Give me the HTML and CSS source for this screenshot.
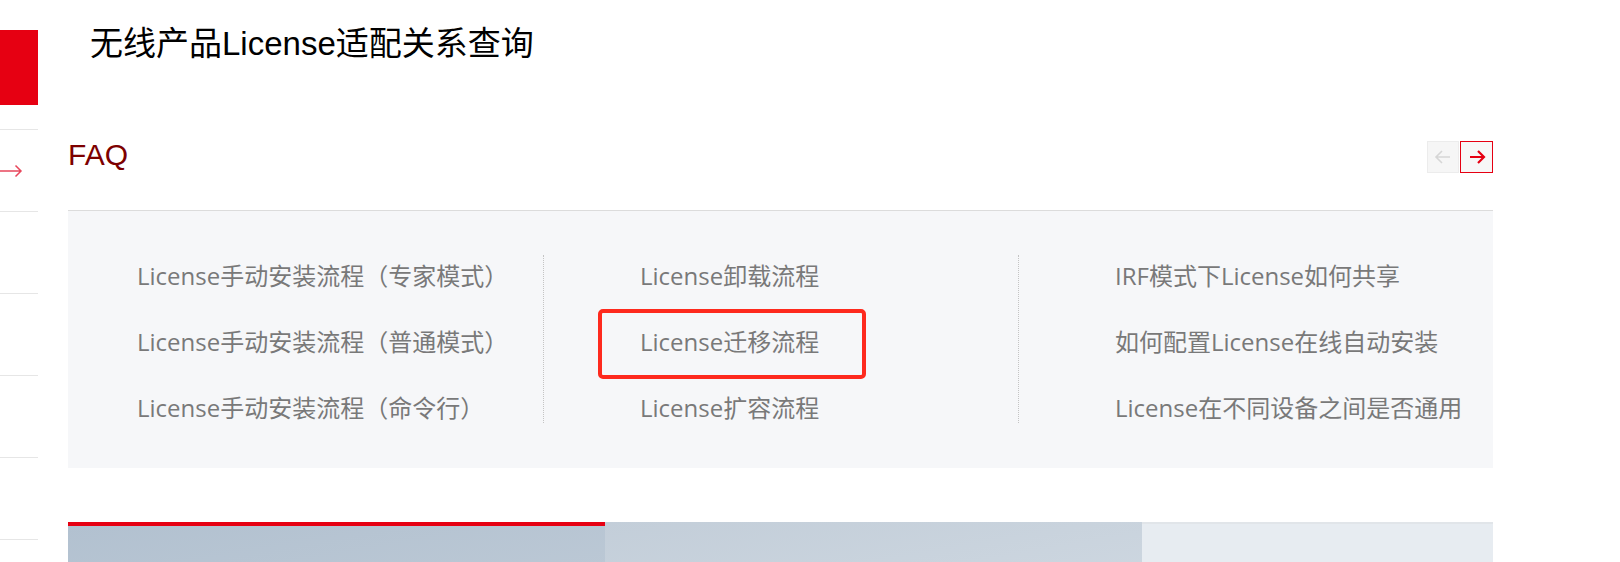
FILE: index.html
```html
<!DOCTYPE html>
<html>
<head>
  <title>无线产品License适配关系查询</title>
  <link rel="stylesheet" href="styles.css">
</head>
<body>
  <div class="page">
    <div class="sidebar">
      <div class="side-top"></div>
      <ul class="side-list">
        <li class="side-item">
          <svg class="side-arrow" width="24" height="14" viewBox="0 0 24 14">
            <path d="M0 7H21M15.5 1.5L21 7L15.5 12.5" fill="none" stroke="#e8475c" stroke-width="1.5"/>
          </svg>
        </li>
        <li class="side-item"></li>
        <li class="side-item"></li>
        <li class="side-item"></li>
        <li class="side-item"></li>
        <li class="side-item"></li>
      </ul>
    </div>

    <div class="main">
      <h1 class="title">无线产品License适配关系查询</h1>

      <div class="faq-head">
        <h2 class="faq-title">FAQ</h2>
        <div class="nav">
          <span class="nav-btn prev">
            <svg width="20" height="20" viewBox="0 0 20 20">
              <path d="M17 10H3M9 4L3 10L9 16" fill="none" stroke="#d6d6d6" stroke-width="1.6"/>
            </svg>
          </span>
          <span class="nav-btn next">
            <svg width="20" height="20" viewBox="0 0 20 20">
              <path d="M3 10H17M11 4L17 10L11 16" fill="none" stroke="#e60012" stroke-width="2.2"/>
            </svg>
          </span>
        </div>
      </div>

      <div class="panel">
        <ul class="col first">
          <li>License手动安装流程（专家模式）</li>
          <li>License手动安装流程（普通模式）</li>
          <li>License手动安装流程（命令行）</li>
        </ul>
        <ul class="col">
          <li>License卸载流程</li>
          <li class="marked">License迁移流程<span class="mark"></span></li>
          <li>License扩容流程</li>
        </ul>
        <ul class="col">
          <li>IRF模式下License如何共享</li>
          <li>如何配置License在线自动安装</li>
          <li>License在不同设备之间是否通用</li>
        </ul>
      </div>

      <div class="slides">
        <div class="slide one"></div>
        <div class="slide two"></div>
        <div class="slide three"></div>
      </div>
    </div>
  </div>
</body>
</html>
```

FILE: styles.css
```css
body {
  margin: 0;
  font-family: "Liberation Sans", "Noto Sans CJK SC", sans-serif;
  background-color: #fff;
  overflow: hidden;
}

ul {
  list-style: none;
  margin: 0;
  padding: 0;
}

.page {
  display: flex;
  align-items: flex-start;
}

.sidebar {
  width: 38px;
  flex-shrink: 0;
}

.side-top {
  height: 75px;
  margin-top: 30px;
  background-color: #e60012;
}

.side-list {
  margin-top: 24px;
}

.side-item {
  height: 81px;
  border-top: 1px solid #e6e6e6;
  display: flex;
  align-items: center;
}

.side-arrow {
  display: block;
}

.main {
  width: 1425px;
  margin-left: 30px;
}

.title {
  margin: 24px 0 0 22px;
  font-size: 33px;
  line-height: 40px;
  font-weight: normal;
  color: #000;
}

.faq-head {
  display: flex;
  justify-content: space-between;
  align-items: flex-start;
  height: 80px;
  margin-top: 66px;
}

.faq-title {
  margin: 0;
  font-size: 30px;
  line-height: 50px;
  font-weight: normal;
  color: #7d0000;
}

.nav {
  display: flex;
  gap: 1px;
  margin-top: 11px;
}

.nav-btn {
  width: 30px;
  height: 30px;
  display: flex;
  justify-content: center;
  align-items: center;
  border: 1px solid #ececec;
  background-color: #f6f6f6;
}

.nav-btn.next {
  width: 31px;
  border-color: #e60012;
  background-color: #f7f7f7;
}

.panel {
  display: grid;
  grid-template-columns: 1fr 1fr 1fr;
  border-top: 1px solid #dcdcdc;
  background-color: #f6f7f9;
  padding: 44px 0 45px;
  font-family: "Open Sans", "Noto Sans CJK SC", sans-serif;
  font-size: 24px;
  color: #797979;
}

.col {
  padding: 6px 0 0 96px;
  border-left: 1px dotted #c4c4c4;
}

.col.first {
  padding-left: 69px;
  border-left: none;
}

.col li {
  line-height: 30px;
  white-space: nowrap;
}

.col li + li {
  margin-top: 36px;
}

.marked {
  position: relative;
}

.mark {
  position: absolute;
  left: -42px;
  top: -18px;
  width: 260px;
  height: 62px;
  border: 4px solid #fe2a1e;
  border-radius: 5px;
}

.slides {
  display: flex;
  margin-top: 54px;
  overflow: hidden;
}

.slide {
  width: 537px;
  height: 100px;
  flex-shrink: 0;
}

.slide.one {
  border-top: 4px solid #e60012;
  background: linear-gradient(170deg, #b2c1d0, #bfcbd7);
}

.slide.two {
  background: linear-gradient(170deg, #c3ced9, #d0d9e2);
}

.slide.three {
  border-top: 2px solid #e1e5e9;
  background: linear-gradient(100deg, #e7ecf1 70%, #eef2f6 72%);
}
```
